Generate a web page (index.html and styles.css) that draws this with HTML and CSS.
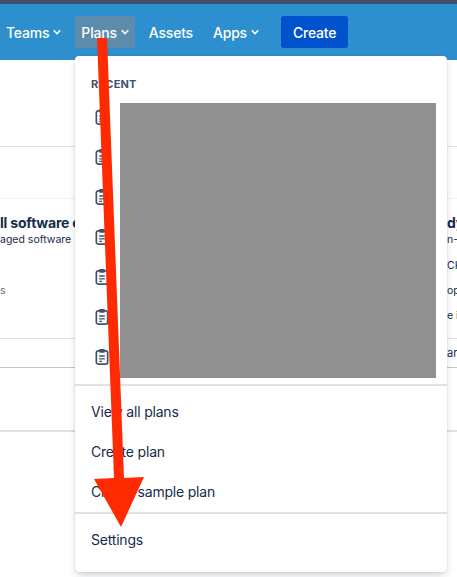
FILE: index.html
```html
<!DOCTYPE html>
<html lang="en">

<head>
    <meta charset="utf-8">
    <meta name="viewport" content="width=device-width, initial-scale=1.0">
    <title>Plans menu</title>
    <link rel="stylesheet" href="styles.css">
</head>

<body>
    <header class="topbar">
        <nav class="nav">
            <button class="nav_item">Teams <svg class="chev" viewBox="0 0 8 6"><path d="M.7 1.3L4 4.6l3.3-3.3"/></svg></button>
            <button class="nav_item nav_open">Plans <svg class="chev" viewBox="0 0 8 6"><path d="M.7 1.3L4 4.6l3.3-3.3"/></svg></button>
            <button class="nav_item">Assets</button>
            <button class="nav_item">Apps <svg class="chev" viewBox="0 0 8 6"><path d="M.7 1.3L4 4.6l3.3-3.3"/></svg></button>
            <button class="create">Create</button>
        </nav>
    </header>

    <main class="page">
        <div class="line first_line"></div>
        <div class="line faint_line"></div>
        <section class="cards">
            <div class="card_left">
                <h2>ll software e</h2>
                <p>aged software</p>
                <p class="low">s</p>
            </div>
            <div class="card_right">
                <h2>dy</h2>
                <p>n-</p>
                <p class="gap1">CK</p>
                <p class="gap2">op</p>
                <p class="gap2">e i</p>
            </div>
        </section>
        <div class="line row_line"></div>
        <p class="row_text">ar</p>
        <div class="line dark_line"></div>
        <div class="line last_line"></div>
    </main>

    <div class="menu">
        <h3 class="menu_title">Recent</h3>
        <div class="recent">
            <div class="icons">
                <svg class="clip" viewBox="0 0 16 18"><use href="#clipboard"/></svg>
                <svg class="clip" viewBox="0 0 16 18"><use href="#clipboard"/></svg>
                <svg class="clip" viewBox="0 0 16 18"><use href="#clipboard"/></svg>
                <svg class="clip" viewBox="0 0 16 18"><use href="#clipboard"/></svg>
                <svg class="clip" viewBox="0 0 16 18"><use href="#clipboard"/></svg>
                <svg class="clip" viewBox="0 0 16 18"><use href="#clipboard"/></svg>
                <svg class="clip" viewBox="0 0 16 18"><use href="#clipboard"/></svg>
            </div>
            <div class="redacted"></div>
        </div>
        <div class="group">
            <a class="menu_item">View all plans</a>
            <a class="menu_item">Create plan</a>
            <a class="menu_item">Create sample plan</a>
        </div>
        <div class="group last_group">
            <a class="menu_item">Settings</a>
        </div>
    </div>

    <svg class="defs" width="0" height="0">
        <symbol id="clipboard" viewBox="0 0 16 18">
            <rect x="2" y="3" width="12" height="14" rx="2" fill="none" stroke="#42526e" stroke-width="1.8"/>
            <rect x="5" y="1" width="6" height="4" rx="1" fill="#42526e"/>
            <path d="M5 8.5h6M5 11.5h6M5 14.2h3" stroke="#42526e" stroke-width="1.4"/>
        </symbol>
    </svg>

    <svg class="arrow" width="150" height="530" viewBox="0 0 150 530">
        <polygon points="97,38 107,38 124,478 144,477 121,527 94,479 114,478"/>
    </svg>
</body>

</html>
```

FILE: styles.css
```css
* {
    box-sizing: border-box;
}

body {
    margin: 0;
    background-color: #fff;
    font-family: Inter, "Liberation Sans", sans-serif;
    color: #172b4d;
}

.topbar {
    height: 60px;
    background-color: #2d8fce;
    border-top: 4px solid #42526e;
}

.nav {
    display: flex;
    align-items: center;
    height: 56px;
}

.nav_item,
.create {
    font-family: inherit;
    font-size: 14px;
    font-weight: 500;
    letter-spacing: -0.2px;
    color: #fff;
    border: 0;
    background: none;
    border-radius: 3px;
    height: 32px;
    white-space: nowrap;
}

.nav_item {
    display: flex;
    align-items: center;
    gap: 4px;
    padding: 0 6px;
    margin-right: 8px;
}

.nav_open {
    background-color: #5c8bab;
}

.chev {
    width: 8px;
    height: 6px;
    fill: none;
    stroke: #fff;
    stroke-width: 1.6;
}

.create {
    background-color: #0052cc;
    padding: 0 12px;
    margin-left: 8px;
}

.page {
    overflow: hidden;
}

.line {
    height: 1px;
    background-color: #dfe1e6;
}

.first_line {
    margin-top: 86px;
}

.faint_line {
    margin-top: 51px;
    background-color: #f1f2f4;
}

.cards {
    display: flex;
    justify-content: space-between;
    height: 139px;
    padding-top: 14px;
    font-size: 10.5px;
}

.card_left {
    width: 100px;
    white-space: nowrap;
}

.card_right {
    width: 10px;
    white-space: nowrap;
    overflow: hidden;
}

.cards h2 {
    margin: 0;
    font-size: 14px;
    line-height: 19px;
    font-weight: 700;
    letter-spacing: -0.2px;
}

.cards p {
    margin: 0;
    line-height: 16px;
}

.cards .low {
    margin-top: 35px;
    color: #5e6c84;
}

.cards .gap1 {
    margin-top: 10px;
}

.cards .gap2 {
    margin-top: 9px;
}

.row_text {
    margin: 6px 0 0 447px;
    font-size: 11px;
    line-height: 16px;
    width: 10px;
    overflow: hidden;
}

.dark_line {
    margin-top: 6px;
    background-color: #c1c7d0;
}

.last_line {
    margin-top: 62px;
    height: 2px;
}

.menu {
    position: absolute;
    left: 75px;
    top: 56px;
    width: 372px;
    height: 516px;
    background-color: #fff;
    border-radius: 4px;
    box-shadow: 0 4px 8px -2px rgba(9, 30, 66, 0.25), 0 0 1px rgba(9, 30, 66, 0.31);
}

.menu_title {
    margin: 0;
    padding: 22px 16px 0;
    font-size: 11px;
    line-height: 12px;
    font-weight: 700;
    letter-spacing: 0.2px;
    text-transform: uppercase;
    color: #42526e;
}

.recent {
    display: flex;
    margin-top: 13px;
    padding-left: 19px;
}

.icons {
    width: 26px;
    display: flex;
    flex-direction: column;
    gap: 23px;
    padding-top: 5px;
}

.clip {
    display: block;
    width: 16px;
    height: 17px;
}

.redacted {
    width: 316px;
    height: 275px;
    background-color: #909090;
}

.group {
    margin-top: 6px;
    padding-top: 6px;
    border-top: 2px solid #dfe1e6;
}

.last_group {
    margin-top: 0;
}

.menu_item {
    display: block;
    padding-left: 16px;
    height: 40px;
    line-height: 40px;
    font-size: 14px;
    letter-spacing: -0.2px;
    color: #172b4d;
}

.defs {
    position: absolute;
    left: 0;
    top: 0;
}

.arrow {
    position: absolute;
    left: 0;
    top: 0;
    pointer-events: none;
}

.arrow polygon {
    fill: #ff2a00;
}
```
